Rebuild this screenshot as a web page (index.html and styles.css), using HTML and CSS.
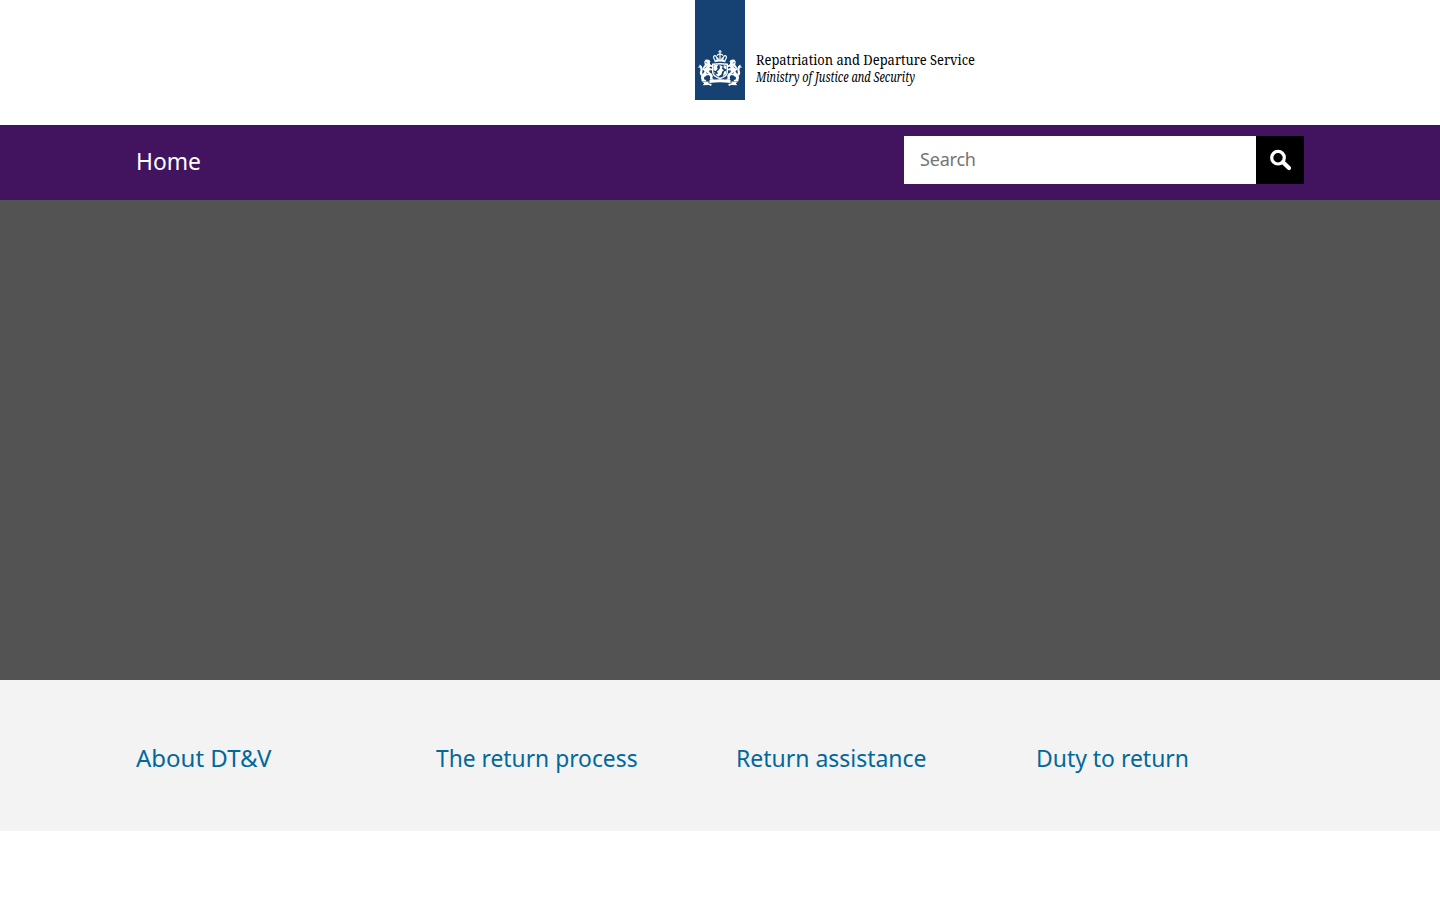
FILE: index.html
```html
<!DOCTYPE html>
<html lang="en">
<head>
<meta charset="utf-8">
<title>Repatriation and Departure Service</title>
<link rel="stylesheet" href="styles.css">
</head>
<body>
<header class="header">
  <a class="logo" href="#" aria-label="Repatriation and Departure Service">
    <svg class="logo-mark" viewBox="0 0 50 100" width="50" height="100">
      <rect width="50" height="100" fill="#154273"/>
      <g fill="#fff">
        <path d="M24.400 50h1.200v1.300h1v1h-1v1.500h-1.200v-1.500h-1v-1h1z"/>
        <g fill="none" stroke="#fff" stroke-width="1.200">
          <path d="M20 60.300Q17.500 57 19.300 55.800t3 4M30 60.300q2.500-3.300.7-4.500t-3 4M22 55.600q1.500-2 3-1.400 1.500-.6 3 1.400M25 54v6M22.500 57.500l1 2.300M27.500 57.500l-1 2.300"/>
          <path d="M19.500 61.300q5.500-1.500 11 0" stroke-width="1.900"/>
          <path d="M17.700 64.300q7.300-1.200 14.600 0v8q0 3.900-7.300 6.200-7.300-2.300-7.300-6.200z" stroke-width="1.400"/>
        </g>
        <path d="M18.500 65.200l5-.5-1.600 2 .8 2-2 2.200-2.200-.6zM24.500 64.900l3.100 1.300-.6 2.500 1.900 1.600-1.800 1.500-.7 2.700-3.300 2.300-2.500-2.300 2.700-1-1.500-1.800 2.400-2.100.8-1.800zM28.600 65.300l2.800.5v3.600l-2.700-1.500zM29.200 71.500l2.200-.8-.5 3.300-3.100 2zM18.600 72l1.500.5.3 1.800z"/>
        <g id="lion">
          <path d="M9.300 61.500l1.500-1.900 3.100.1 1.500 1.600-.7 1.700 1 1.700 2.100.7v1.500l-2.800-.2-.7 1.300 2.900.8v1.500l-3.300.1.800 2.200 1.800 1 1.400 2.500-.7 2.200 1.300.5v1h-3.500l.2-3.200-1.500-1.500-2.300.3-2.500 2 .4 2.200 1.800.4v1.400H6.800l-.9-4.300 1.900-3 1.800-2.800-1.700-1.600.3-2.800 1.500-2z"/>
          <path d="M7.500 76.500Q3.800 74.500 5.100 71.500q.9-2.300-.1-3.700l-2.400-.6 1.900-1 .1-1.600 2.100 1.300q1.700 2.400.7 5.300-1 2.300.9 3.700"/>
        </g>
        <use href="#lion" transform="translate(50 0) scale(-1 1)"/>
        <path d="M14.500 80q10.500-1.300 21 0v2.900q-10.500-1.300-21 0z"/>
        <path d="M13.500 81.500 7.700 82l1.500 1.400-1.500 1.900 6.100-.2 2.300 1 .5-2.200-3.100-.6zM36.500 81.500l5.800.5-1.500 1.400 1.500 1.900-6.100-.2-2.300 1-.5-2.200 3.100-.6z"/>
      </g>
      <path d="M11.500 66.500l-2 1.800M38.500 66.500l2 1.800M11 72.500l2 1.500M39 72.500l-2 1.500M10.500 62.500l1.800.5M39.500 62.500l-1.800.5" fill="none" stroke="#154273" stroke-width=".7"/>
    </svg>
    <svg class="logo-text" viewBox="0 0 240 40" width="240" height="40">
      <text class="logo-name" x="1" y="15" textLength="219" lengthAdjust="spacingAndGlyphs">Repatriation and Departure Service</text>
      <text class="logo-ministry" x="1" y="32" textLength="159" lengthAdjust="spacingAndGlyphs">Ministry of Justice and Security</text>
    </svg>
  </a>
</header>
<nav class="navbar">
  <div class="container navbar-inner">
    <a class="nav-link" href="#">Home</a>
    <form class="search">
      <input class="search-input" type="text" placeholder="Search" aria-label="Search">
      <button class="search-button" type="button" aria-label="Search">
        <svg class="search-icon" viewBox="0 0 22 22" width="22" height="22" fill="none" stroke="#fff">
          <circle cx="8" cy="7.700" r="6.300" stroke-width="3.200"/>
          <path d="M13 12.300l6 5.700" stroke-width="4.200" stroke-linecap="round"/>
        </svg>
      </button>
    </form>
  </div>
</nav>
<main>
  <div class="hero"></div>
  <section class="topics">
    <div class="container topics-grid">
      <a class="topic about" href="#">About DT&amp;V</a>
      <a class="topic process" href="#">The return process</a>
      <a class="topic assistance" href="#">Return assistance</a>
      <a class="topic duty" href="#">Duty to return</a>
    </div>
  </section>
</main>
</body>
</html>
```
FILE: styles.css
```css
* { box-sizing: border-box; }
body {
  margin: 0;
  background: #fff;
  font-family: "Noto Sans", sans-serif;
}
a { text-decoration: none; }
.container { width: 1168px; margin: 0 auto; }
.header { height: 125px; padding-left: 695px; }
.logo { display: flex; width: 300px; }
.logo-mark { display: block; }
.logo-text { display: block; margin: 50px 0 0 10px; overflow: visible; }
.logo-name { font: 14.500px "Noto Serif", "Liberation Serif", serif; }
.logo-ministry { font: italic 14px "Noto Serif", "Liberation Serif", serif; }
.navbar { height: 75px; background: #42145f; }
.navbar-inner { display: flex; justify-content: space-between; padding-top: 11px; }
.nav-link {
  color: #fff;
  font-size: 24px;
  line-height: 50px;
  transform: scaleX(.95);
  transform-origin: left;
}
.search { display: flex; width: 400px; height: 48px; }
.search-input {
  width: 352px;
  height: 48px;
  padding: 0 16px 2px;
  border: 0;
  border-radius: 0;
  background: #fff;
  font: 18px "Noto Sans", sans-serif;
  letter-spacing: -.2px;
}
.search-input::placeholder { color: #757575; }
.search-button {
  display: flex;
  width: 48px;
  height: 48px;
  padding: 14px 0 0 14px;
  border: 0;
  background: #000;
}
.search-icon { overflow: visible; }
.hero { height: 480px; background: #535353; }
.topics { height: 151px; padding-top: 60px; background: #f3f3f3; }
.topics-grid { display: grid; grid-template-columns: repeat(4, 300px); }
.topic {
  justify-self: start;
  color: #01689b;
  font-size: 24px;
  line-height: 36px;
  white-space: nowrap;
  transform-origin: left;
}
.process { transform: scaleX(.95); }
.assistance { transform: scaleX(.957); }
.duty { transform: scaleX(.955); }
```
